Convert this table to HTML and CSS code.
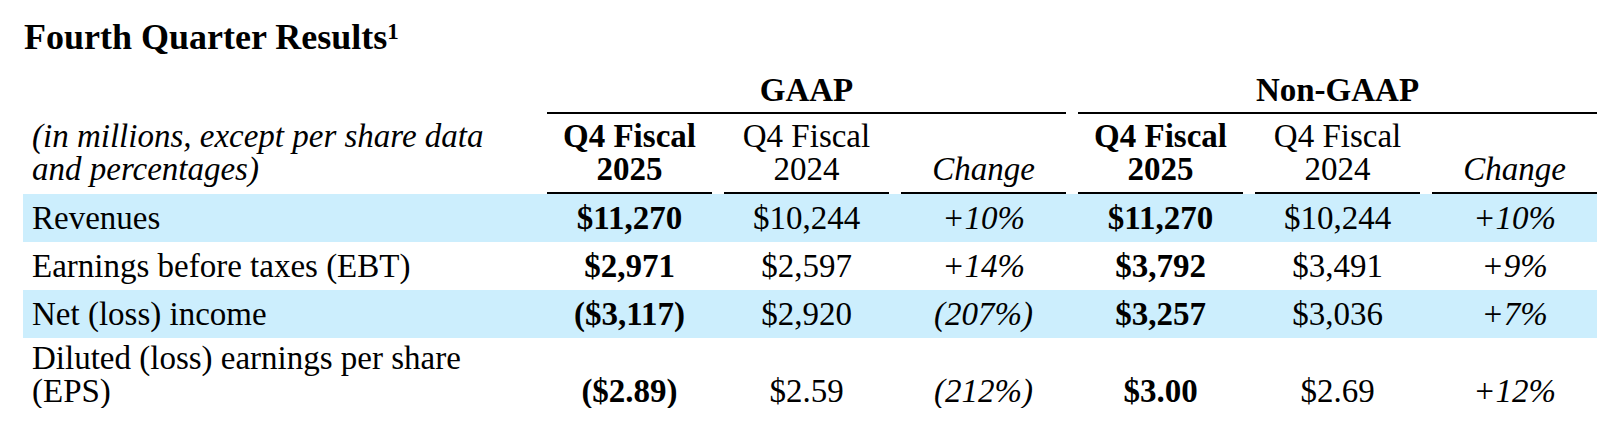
FILE: index.html
```html
<!DOCTYPE html>
<html lang="en">
<head>
<meta charset="utf-8">
<title>Fourth Quarter Results</title>
<link rel="stylesheet" href="styles.css">
</head>
<body>
<div class="page">
  <h1 class="title">Fourth Quarter Results<sup class="note">1</sup></h1>
  <table class="results">
    <colgroup>
      <col class="col-label">
      <col class="col-num"><col class="col-num"><col class="col-num">
      <col class="col-num"><col class="col-num"><col class="col-num">
    </colgroup>
    <thead>
      <tr class="group-row">
        <th class="blank"></th>
        <th colspan="3"><div class="rule">GAAP</div></th>
        <th colspan="3"><div class="rule">Non-GAAP</div></th>
      </tr>
      <tr class="head-row">
        <th class="label-head">(in millions, except per share data<br>and percentages)</th>
        <th class="cur"><div class="rule">Q4 Fiscal<br>2025</div></th>
        <th class="prior"><div class="rule">Q4 Fiscal<br>2024</div></th>
        <th class="chg"><div class="rule"><br>Change</div></th>
        <th class="cur"><div class="rule">Q4 Fiscal<br>2025</div></th>
        <th class="prior"><div class="rule">Q4 Fiscal<br>2024</div></th>
        <th class="chg"><div class="rule"><br>Change</div></th>
      </tr>
    </thead>
    <tbody>
      <tr class="shade">
        <td class="label">Revenues</td>
        <td class="cur">$11,270</td><td class="prior">$10,244</td><td class="chg">+10%</td>
        <td class="cur">$11,270</td><td class="prior">$10,244</td><td class="chg">+10%</td>
      </tr>
      <tr>
        <td class="label">Earnings before taxes (EBT)</td>
        <td class="cur">$2,971</td><td class="prior">$2,597</td><td class="chg">+14%</td>
        <td class="cur">$3,792</td><td class="prior">$3,491</td><td class="chg">+9%</td>
      </tr>
      <tr class="shade">
        <td class="label">Net (loss) income</td>
        <td class="cur">($3,117)</td><td class="prior">$2,920</td><td class="chg">(207%)</td>
        <td class="cur">$3,257</td><td class="prior">$3,036</td><td class="chg">+7%</td>
      </tr>
      <tr class="tall">
        <td class="label">Diluted (loss) earnings per share<br>(EPS)</td>
        <td class="cur">($2.89)</td><td class="prior">$2.59</td><td class="chg">(212%)</td>
        <td class="cur">$3.00</td><td class="prior">$2.69</td><td class="chg">+12%</td>
      </tr>
    </tbody>
  </table>
</div>
</body>
</html>
```
FILE: styles.css
```css
html, body {
  margin: 0;
  padding: 0;
  background: #ffffff;
}

.page {
  font-family: "Liberation Serif", "Times New Roman", serif;
  color: #000000;
  font-size: 33px;
}

.title {
  margin: 17px 0 17px 24px;
  font-size: 36px;
  line-height: 40px;
  font-weight: bold;
}

.note {
  font-size: 23px;
  line-height: 0;
  vertical-align: 10px;
}

.results {
  margin-left: 23px;
  width: 1574px;
  table-layout: fixed;
  border-collapse: collapse;
  border-spacing: 0;
}

.col-label { width: 512px; }
.col-num { width: 177px; }

.results th,
.results td {
  padding: 0;
  text-align: center;
  vertical-align: bottom;
}

.rule {
  margin-left: 12px;
  border-bottom: 2px solid #000000;
  line-height: 33px;
}

.group-row .rule {
  font-weight: bold;
  padding-bottom: 5px;
}

.head-row th {
  font-weight: normal;
}

.head-row .rule {
  padding: 6px 0;
}

.head-row .cur {
  font-weight: bold;
}

.head-row .chg {
  font-style: italic;
}

.label-head {
  font-style: italic;
  font-weight: normal;
  text-align: left !important;
  padding: 0 0 8px 9px !important;
  line-height: 33px;
}

.results td {
  line-height: 48px;
  height: 48px;
}

.results td.label {
  text-align: left;
  padding-left: 9px;
}

.results td.cur,
.results td.prior,
.results td.chg {
  padding-left: 12px;
}

.results td.cur { font-weight: bold; }
.results td.chg { font-style: italic; }

.shade td {
  background: #cceefd;
}

.tall td {
  line-height: 33px;
  height: auto;
}

.tall td.label {
  padding-top: 4px;
}
```
